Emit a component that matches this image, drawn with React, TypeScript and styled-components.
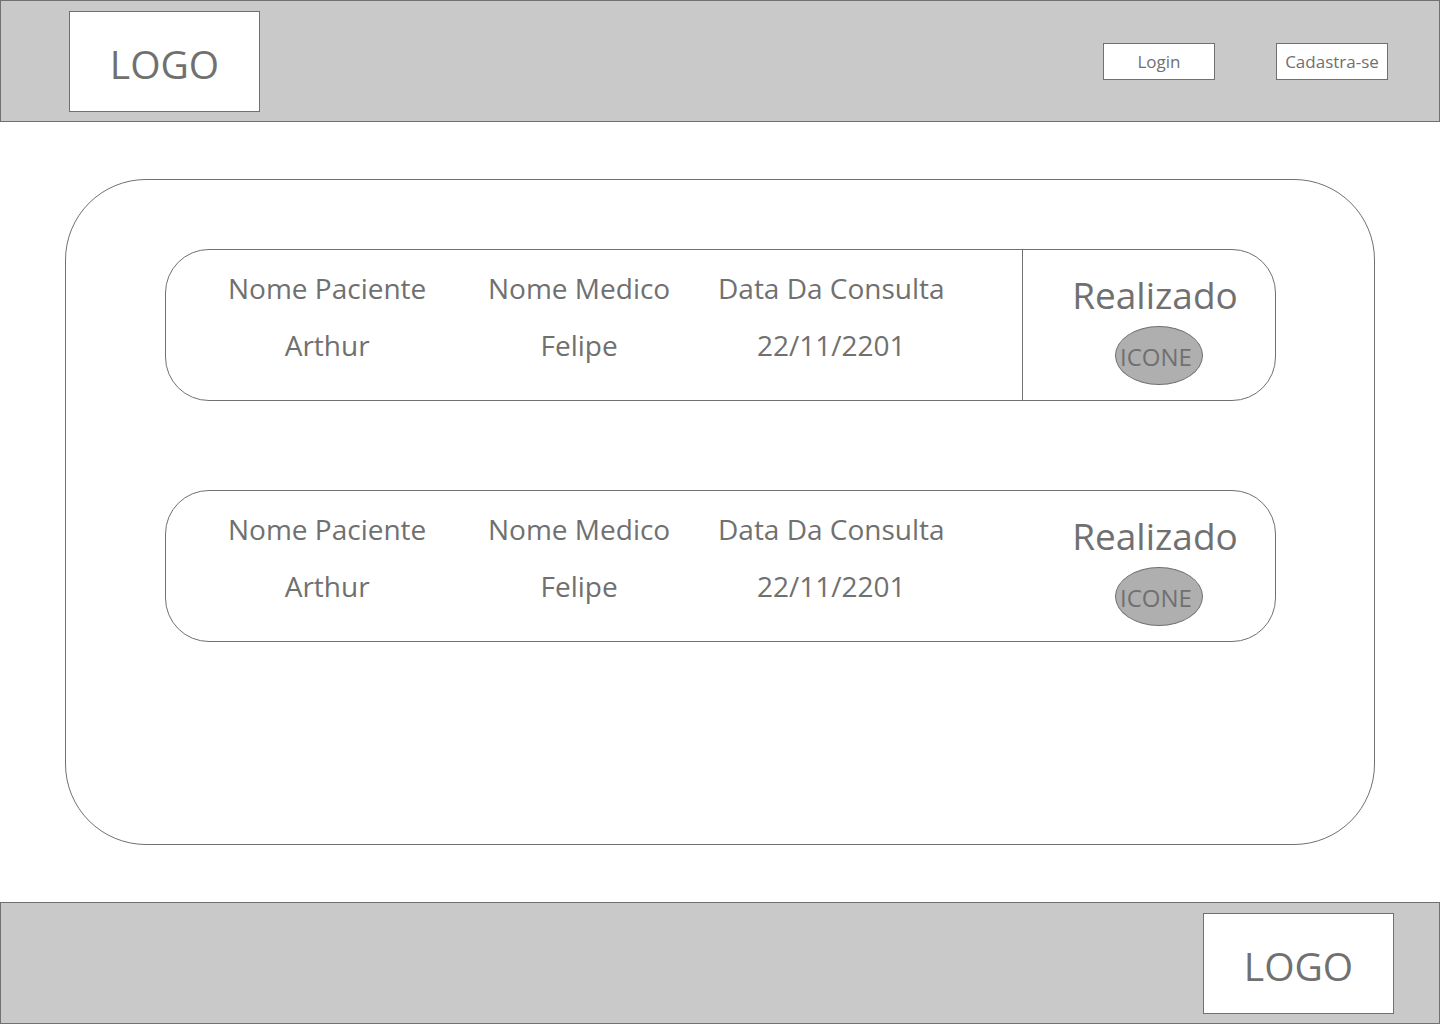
import React from "react";
import styled, { createGlobalStyle } from "styled-components";

const line = "#707070";

const GlobalStyle = createGlobalStyle`
  *, *::before, *::after { box-sizing: border-box; }
  body {
    margin: 0;
    background: #fff;
    color: ${line};
    font-family: "Open Sans", "Noto Sans", sans-serif;
  }
`;

const Page = styled.div`
  min-height: 100vh;
  display: flex;
  flex-direction: column;
`;

const Bar = styled.div`
  display: flex;
  align-items: center;
  background: #c9c9c9;
  border: 1px solid ${line};
  padding: 10px 51px 9px 68px;
`;

const FooterBar = styled(Bar)`
  justify-content: flex-end;
  padding-right: 45px;
`;

const Logo = styled.div`
  display: flex;
  align-items: center;
  justify-content: center;
  width: 191px;
  height: 101px;
  padding-top: 4px;
  background: #fff;
  border: 1px solid ${line};
  font-size: 39px;
  line-height: 52px;
`;

const Actions = styled.nav`
  display: flex;
  gap: 61px;
  margin-left: auto;
`;

const Action = styled.button`
  width: 112px;
  height: 37px;
  padding: 0;
  background: #fff;
  border: 1px solid ${line};
  border-radius: 0;
  color: inherit;
  font-family: inherit;
  font-size: 17px;
  line-height: 24px;
  white-space: nowrap;
`;

const Panel = styled.main`
  flex: 1;
  display: flex;
  flex-direction: column;
  gap: 89px;
  margin: 57px 65px;
  padding: 69px 98px 69px 99px;
  border: 1px solid ${line};
  border-radius: 81px;
`;

const Card = styled.article`
  display: grid;
  grid-template-columns: minmax(0, 1fr) 253px;
  height: 152px;
  border: 1px solid ${line};
  border-radius: 44px;
`;

const Details = styled.dl`
  display: grid;
  grid-template-columns: 260px 230px 222px;
  justify-items: start;
  margin: 0;
  padding: 18px 0 0 62px;
`;

const Field = styled.div`
  display: flex;
  flex-direction: column;
  align-items: center;
  gap: 17px;
  font-size: 28px;
  line-height: 40px;
  white-space: nowrap;
`;

const Term = styled.dt``;

const Value = styled.dd`
  margin: 0;
`;

const Status = styled.div<{ $divided: boolean }>`
  display: flex;
  flex-direction: column;
  align-items: center;
  gap: 5px;
  padding: 19px 0 0 20px;
  border-left: 1px solid ${(p) => (p.$divided ? line : "transparent")};
`;

const StatusLabel = styled.div`
  padding-right: 8px;
  font-size: 37px;
  line-height: 52px;
`;

const Badge = styled.div`
  display: flex;
  align-items: center;
  justify-content: center;
  width: 88px;
  height: 59px;
  padding: 3px 6px 0 0;
  background: #afafaf;
  border: 1px solid ${line};
  border-radius: 50%;
  font-size: 24px;
  line-height: 32px;
`;

const appointments = [
  { id: 1, patient: "Arthur", doctor: "Felipe", date: "22/11/2201", divided: true },
  { id: 2, patient: "Arthur", doctor: "Felipe", date: "22/11/2201", divided: false },
];

export default function App() {
  return (
    <>
      <GlobalStyle />
      <Page>
        <Bar as="header">
          <Logo>LOGO</Logo>
          <Actions>
            <Action type="button">Login</Action>
            <Action type="button">Cadastra-se</Action>
          </Actions>
        </Bar>
        <Panel>
          {appointments.map((a) => (
            <Card key={a.id}>
              <Details>
                <Field><Term>Nome Paciente</Term><Value>{a.patient}</Value></Field>
                <Field><Term>Nome Medico</Term><Value>{a.doctor}</Value></Field>
                <Field><Term>Data Da Consulta</Term><Value>{a.date}</Value></Field>
              </Details>
              <Status $divided={a.divided}>
                <StatusLabel>Realizado</StatusLabel>
                <Badge>ICONE</Badge>
              </Status>
            </Card>
          ))}
        </Panel>
        <FooterBar as="footer">
          <Logo>LOGO</Logo>
        </FooterBar>
      </Page>
    </>
  );
}
